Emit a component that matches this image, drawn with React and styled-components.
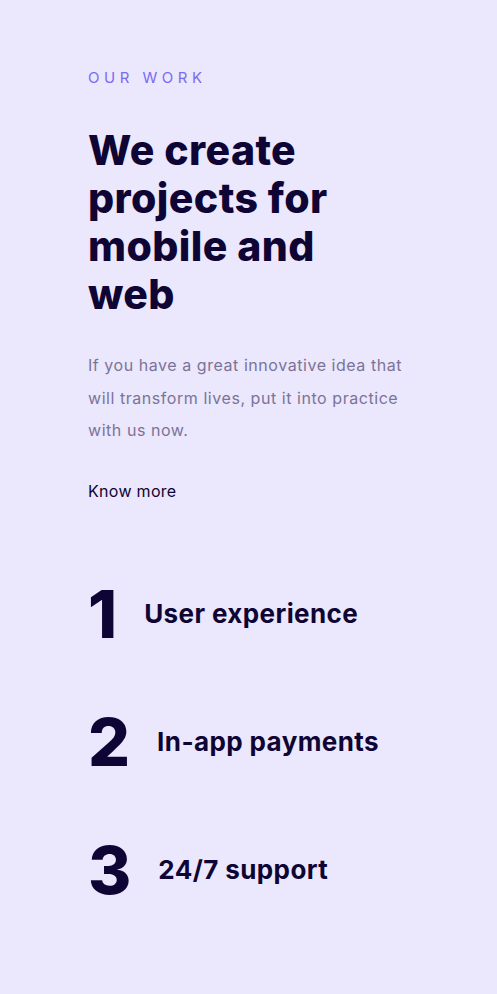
import React from 'react';
import styled, {createGlobalStyle} from 'styled-components';

const GlobalStyle = createGlobalStyle`
  html, body {
    margin: 0;
    padding: 0;
    background: #ebe7fc;
  }
  body {
    font-family: Inter, "Noto Sans", sans-serif;
  }
`;

const Section = styled.section`
  min-height: 994px;
  box-sizing: border-box;
  padding: 68px 40px 0 88px;
  background: #ebe7fc;
`;

const Eyebrow = styled.div`
  font-size: 15px;
  font-weight: 400;
  letter-spacing: 4.5px;
  color: #7a6bf0;
  line-height: 20px;
  text-transform: uppercase;
`;

const Heading = styled.h1`
  margin: 38px 0 0;
  font-size: 41px;
  font-weight: 800;
  line-height: 48px;
  letter-spacing: 0.4px;
  color: #0e0534;
  white-space: nowrap;
`;

const Text = styled.p`
  margin: 31px 0 0;
  font-size: 16px;
  line-height: 32.5px;
  letter-spacing: 0.55px;
  color: #7a7498;
  white-space: nowrap;
`;

const More = styled.a`
  display: block;
  margin-top: 34px;
  font-size: 16px;
  letter-spacing: 0.3px;
  color: #0e0534;
  text-decoration: none;
  cursor: pointer;
`;

const List = styled.ul`
  list-style: none;
  margin: 76px 0 0;
  padding: 0;
  display: flex;
  flex-direction: column;
  gap: 54px;
`;

const Item = styled.li`
  display: flex;
  align-items: center;
  gap: ${props => props.gap}px;
  height: 74px;
`;

const Num = styled.span`
  font-size: 66px;
  font-weight: 800;
  line-height: 74px;
  color: #0e0534;
`;

const Label = styled.span`
  font-size: 26px;
  font-weight: 700;
  color: #0e0534;
  letter-spacing: 0.4px;
`;

const items = [
  {n: '1', label: 'User experience', gap: 27},
  {n: '2', label: 'In-app payments', gap: 27},
  {n: '3', label: '24/7 support', gap: 27},
];

const App = () => {
  return (
    <>
      <GlobalStyle/>
      <Section>
        <Eyebrow>Our work</Eyebrow>
        <Heading>We create<br/>projects for<br/>mobile and<br/>web</Heading>
        <Text>
          If you have a great innovative idea that<br/>
          will transform lives, put it into practice<br/>
          with us now.
        </Text>
        <More>Know more</More>
        <List>
          {items.map(i => (
            <Item key={i.n} gap={i.gap}>
              <Num>{i.n}</Num>
              <Label>{i.label}</Label>
            </Item>
          ))}
        </List>
      </Section>
    </>
  );
};

export default App;
